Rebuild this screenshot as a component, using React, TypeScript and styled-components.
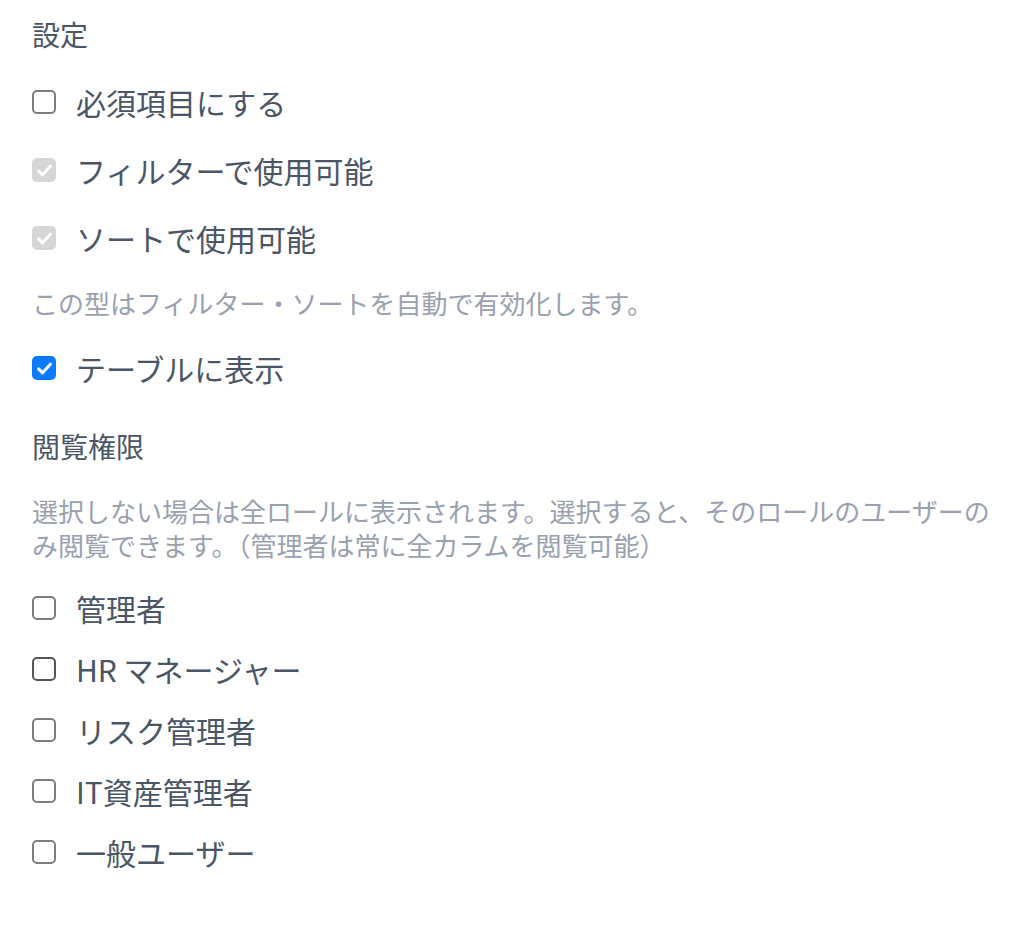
import styled, { createGlobalStyle } from "styled-components";

type BoxState = "off" | "locked" | "on";

interface BoxProps {
	readonly $state: BoxState;
	readonly $dark?: boolean;
}

const GlobalStyle = createGlobalStyle`
	body {
		margin: 0;
		background: #ffffff;
		font-family: "Noto Sans CJK JP", "Noto Sans", sans-serif;
		-webkit-font-smoothing: antialiased;
	}
`;

const Page = styled.div`
	display: flex;
	flex-direction: column;
	padding: 14px 24px 40px 32px;
`;

const Section = styled.section`
	display: flex;
	flex-direction: column;
	gap: 28px;

	& + & {
		margin-top: 38px;
	}
`;

const Heading = styled.h3`
	margin: 0;
	font-size: 28px;
	line-height: 40px;
	font-weight: 400;
	color: #4a5565;
`;

const Row = styled.label`
	display: flex;
	align-items: center;
	gap: 20px;
	height: 40px;
	font-size: 30px;
	line-height: 40px;
	color: #4a5565;
	cursor: pointer;
`;

const Box = styled.span<BoxProps>`
	display: flex;
	align-items: center;
	justify-content: center;
	flex-shrink: 0;
	box-sizing: border-box;
	width: 24px;
	height: 24px;
	border-radius: 5px;
	background-color: ${(props) =>
		props.$state === "on"
			? "#0a7aff"
			: props.$state === "locked"
				? "#d6d6d6"
				: "#ffffff"};
	border: ${(props) =>
		props.$state === "off"
			? `2px solid ${props.$dark ? "#555555" : "#7d7d7d"}`
			: "none"};

	svg {
		width: 19px;
		height: 19px;
	}
`;

const Help = styled.p`
	margin: 0;
	font-size: 26px;
	line-height: 34px;
	color: #99a1af;
`;

const RoleList = styled.div`
	display: flex;
	flex-direction: column;
	gap: 21px;
	margin-top: -2px;
`;

const Check = () => (
	<svg viewBox="0 0 24 24" fill="none">
		<path
			d="M4.5 12.5l5 5L19.5 6.5"
			stroke="#ffffff"
			strokeWidth="3.8"
			strokeLinecap="round"
			strokeLinejoin="round"
		/>
	</svg>
);

type CheckItemProps = {
	label: string;
	state: BoxState;
	dark?: boolean;
};

const CheckItem = ({ label, state, dark }: CheckItemProps) => (
	<Row>
		<Box $state={state} $dark={dark}>
			{state !== "off" && <Check />}
		</Box>
		{label}
	</Row>
);

const roles = [
	{ label: "管理者" },
	{ label: "HR マネージャー", dark: true },
	{ label: "リスク管理者" },
	{ label: "IT資産管理者" },
	{ label: "一般ユーザー" },
];

export default function App() {
	return (
		<>
			<GlobalStyle />
			<Page>
				<Section>
					<Heading>設定</Heading>
					<CheckItem label="必須項目にする" state="off" />
					<CheckItem label="フィルターで使用可能" state="locked" />
					<CheckItem label="ソートで使用可能" state="locked" />
					<Help>この型はフィルター・ソートを自動で有効化します。</Help>
					<CheckItem label="テーブルに表示" state="on" />
				</Section>

				<Section>
					<Heading>閲覧権限</Heading>
					<Help>
						選択しない場合は全ロールに表示されます。選択すると、そのロールのユーザーのみ閲覧できます。（管理者は常に全カラムを閲覧可能）
					</Help>
					<RoleList>
						{roles.map((role) => (
							<CheckItem
								key={role.label}
								label={role.label}
								state="off"
								dark={role.dark}
							/>
						))}
					</RoleList>
				</Section>
			</Page>
		</>
	);
}
